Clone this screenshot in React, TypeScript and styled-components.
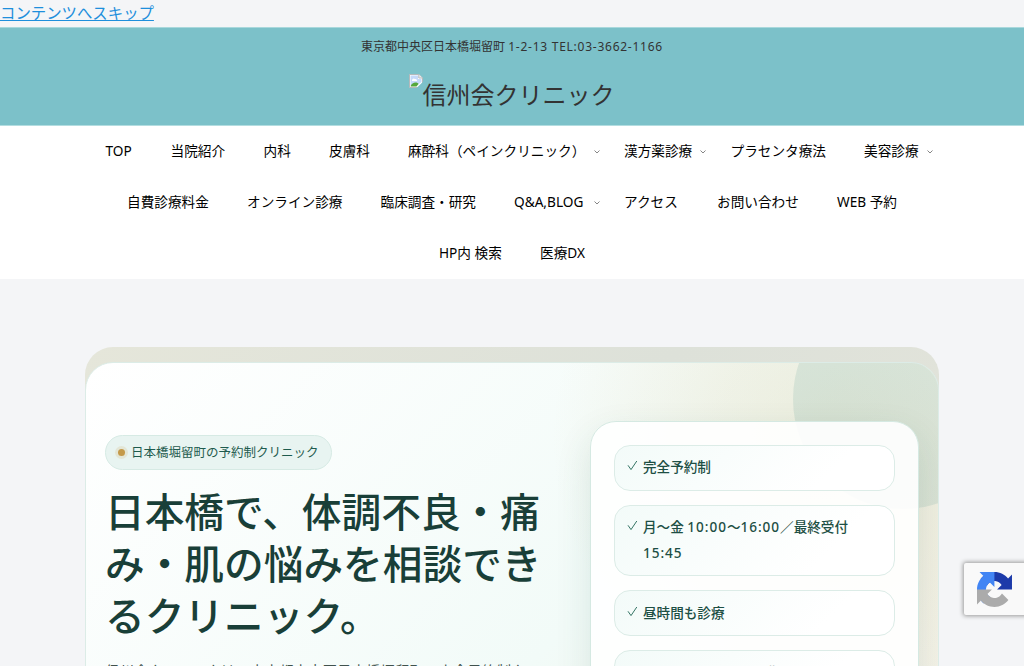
import React from "react";
import styled, { createGlobalStyle } from "styled-components";

const Global = createGlobalStyle`
  * { box-sizing: border-box; }
  html, body { margin: 0; height: 666px; overflow: hidden; }
  body {
    background: #f4f5f7;
    color: #333;
    font-family: "Noto Sans", "Noto Sans CJK JP", sans-serif;
    font-size: 17px;
    line-height: 27px;
  }
`;

const Page = styled.div`
  height: 666px;
  overflow: hidden;
`;

const SkipLink = styled.a`
  display: block;
  width: max-content;
  height: 27px;
  line-height: 28px;
  font-size: 15.4px;
  color: #1e8fdc;
  text-decoration: underline;
`;

const Header = styled.header`
  height: 99px;
  background: #7cc1c9;
  border-top: 1px solid #a9d8dc;
  border-bottom: 1px solid #b3dde0;
  display: flex;
  flex-direction: column;
  align-items: center;
`;

const Tagline = styled.div`
  margin-top: 9px;
  font-size: 12px;
  line-height: 20px;
  white-space: nowrap;
`;

const Latin = styled.span<{ $track: number }>`
  letter-spacing: ${(p) => p.$track}px;
`;

const Logo = styled.div`
  display: flex;
  align-items: flex-start;
  margin: 16px 1px 0 0;
  font-size: 24px;
  line-height: 43px;
  white-space: nowrap;
`;

const Nav = styled.nav`
  background: #fff;
  height: 153px;
`;

const NavRow = styled.div<{ $pad: number }>`
  display: flex;
  height: 51px;
  padding-left: ${(p) => p.$pad}px;
`;

const NavItem = styled.a<{ $w: number }>`
  flex: none;
  display: flex;
  align-items: center;
  width: ${(p) => p.$w}px;
  height: 51px;
  color: #000;
  font-size: 13.65px;
  white-space: nowrap;
`;

const NavLabel = styled.span<{ $w: number }>`
  flex: none;
  width: ${(p) => p.$w}px;
  padding-bottom: 3px;
`;

const Stage = styled.main`
  margin: 68px 85px 0;
  width: 854px;
  height: 340px;
  border-radius: 28px 28px 0 0;
  background: linear-gradient(135deg, #e5e6da 0%, #dde1d9 50%, #e1e3da 75%, #dfe6df 100%);
  padding-top: 15px;
`;

const Hero = styled.section`
  position: relative;
  height: 640px;
  border: 1px solid #dcece7;
  border-radius: 28px;
  overflow: hidden;
  background:
    radial-gradient(circle at 740px 75px, rgba(202, 164, 82, 0.16), rgba(202, 164, 82, 0.11) 110px, transparent 275px),
    linear-gradient(135deg, #ffffff 0%, #f2fbf8 50%, #f5f3e9 78%, #f5f3e9 100%);
  display: flex;
  align-items: flex-start;
`;

const Orb = styled.div`
  position: absolute;
  left: 707px;
  top: -74px;
  width: 220px;
  height: 220px;
  border-radius: 50%;
  background: rgba(80, 150, 145, 0.14);
`;

const Copy = styled.div`
  width: 504px;
  padding: 72px 0 0 19px;
`;

const Pill = styled.div`
  display: flex;
  align-items: center;
  width: 227px;
  height: 35px;
  padding: 0 0 1px 12px;
  border: 1px solid #d6eae4;
  border-radius: 18px;
  background: #e8f4f1;
  color: #1e5b4e;
  font-size: 12.5px;
  white-space: nowrap;
`;

const Dot = styled.i`
  flex: none;
  width: 7px;
  height: 7px;
  margin-right: 6px;
  border-radius: 50%;
  background: #c49a4a;
  box-shadow: 0 0 0 3px #e3e6d6;
`;

const Title = styled.h1`
  margin: 16px 0 0;
  color: #193f38;
  font-size: 39.7px;
  font-weight: 500;
  line-height: 52.2px;
  white-space: nowrap;
`;

const Lead = styled.p`
  margin: 14px 0 0;
  font-size: 14.5px;
  line-height: 29px;
  color: #40524d;
  white-space: nowrap;
`;

const Panel = styled.aside`
  position: relative;
  flex: none;
  width: 329px;
  height: 520px;
  margin-top: 58px;
  padding: 23px;
  border: 1px solid #d5e9e2;
  border-radius: 26px;
  background: rgba(255, 255, 255, 0.9);
  box-shadow: 0 14px 36px rgba(31, 90, 76, 0.12);
  display: flex;
  flex-direction: column;
  gap: 14px;
`;

const Check = styled.div`
  flex: none;
  display: flex;
  align-items: flex-start;
  padding: 8.4px 12px 10px 12px;
  border: 1px solid #dcece7;
  border-radius: 16px;
  background: linear-gradient(135deg, #f3fbf9, #ffffff 75%);
  color: #1d4f44;
  font-size: 13.6px;
  font-weight: 500;
  line-height: 25.5px;
`;

const CheckText = styled.span`
  margin-left: 5px;
  white-space: nowrap;
`;

const Badge = styled.div`
  position: absolute;
  left: 964px;
  top: 563px;
  width: 70px;
  height: 52px;
  padding: 9px 13px;
  border-radius: 2px;
  background: #f9f9f9;
  box-shadow: 0 0 4px 1px #999;
`;

const Caret = () => (
  <svg width="6" height="4" viewBox="0 0 6 4" fill="none" stroke="#666" strokeWidth="0.8">
    <path d="M0.5 0.5 3 3 5.5 0.5" />
  </svg>
);

const Tick = () => (
  <svg width="11" height="24" viewBox="0 0 11 24" fill="none" stroke="#357565" strokeWidth="1">
    <path d="M1 11.3 4 15.6 9.8 7" />
  </svg>
);

const BrokenImage = () => (
  <svg width="14" height="16" viewBox="0 0 14 16">
    <path d="M.5 1.5H10L13.5 5V14.5H.5Z" fill="#fff" stroke="#b4b9bb" />
    <path d="M1.500 2.500H9V6H12.500V9L7 13H1.500Z" fill="#c5d9fa" />
    <path d="M3 7a2 2 0 0 1 3-1 1.6 1.6 0 0 1 2 2H3Z" fill="#fff" />
    <path d="M1.500 13.500c1-3 3-4 5-4 1.500 0 2.500.5 3 1.500L7.500 13.500Z" fill="#55a83b" />
    <path d="M7.500 15 14 8.800V15Z" fill="#7cc1c9" />
    <path d="M9.800 1.500V5H13.300" fill="#eee" stroke="#b4b9bb" />
  </svg>
);

const Recaptcha = () => (
  <svg width="35" height="35" viewBox="0 0 64 64">
    <path d="M64 31.955a33 33 0 0 0-.033-1.370V4.687l-7.160 7.160C50.948 4.674 42.033.093 32.050.093c-10.389 0-19.622 4.960-25.458 12.640l11.736 11.860a15.550 15.550 0 0 1 4.754-5.334c2.050-1.600 4.952-2.906 8.968-2.906.485 0 .86.057 1.135.163 4.976.393 9.288 3.140 11.828 7.124l-8.307 8.307L64 31.953" fill="#1c3aa9" />
    <path d="M31.862.094a33 33 0 0 0-1.370.033H4.594l7.160 7.160C4.580 13.147 0 22.060 0 32.046c0 10.388 4.960 19.622 12.640 25.458L24.500 45.768a15.550 15.550 0 0 1-5.334-4.754c-1.600-2.050-2.906-4.952-2.906-8.968 0-.485.057-.86.163-1.135.393-4.976 3.140-9.288 7.124-11.828l8.307 8.307L31.860.095" fill="#4285f4" />
    <path d="M.001 32.045a33 33 0 0 0 .033 1.370v25.898l7.160-7.160c5.860 7.173 14.774 11.754 24.760 11.754 10.388 0 19.622-4.960 25.458-12.640L45.675 39.407a15.550 15.550 0 0 1-4.754 5.334c-2.050 1.600-4.952 2.906-8.968 2.906-.485 0-.86-.057-1.135-.163-4.976-.393-9.288-3.140-11.828-7.124l8.307-8.307c-10.522.041-22.400.066-27.295-.005" fill="#ababab" />
  </svg>
);

type Entry = { label: string; step: number; text: number; sub?: boolean };

const rows: { pad: number; items: Entry[] }[] = [
  {
    pad: 105.5,
    items: [
      { label: "TOP", step: 65, text: 27 },
      { label: "当院紹介", step: 93, text: 55 },
      { label: "内科", step: 65.5, text: 27 },
      { label: "皮膚科", step: 79, text: 41 },
      { label: "麻酔科（ペインクリニック）", step: 216, text: 185.5, sub: true },
      { label: "漢方薬診療", step: 106.5, text: 75.5, sub: true },
      { label: "プラセンタ療法", step: 133.5, text: 95 },
      { label: "美容診療", step: 70, text: 62.5, sub: true },
    ],
  },
  {
    pad: 127,
    items: [
      { label: "自費診療料金", step: 120, text: 82 },
      { label: "オンライン診療", step: 133.5, text: 95 },
      { label: "臨床調査・研究", step: 133.5, text: 95 },
      { label: "Q&A,BLOG", step: 110, text: 79.5, sub: true },
      { label: "アクセス", step: 93, text: 54 },
      { label: "お問い合わせ", step: 120, text: 82 },
      { label: "WEB 予約", step: 62, text: 61 },
    ],
  },
  {
    pad: 439,
    items: [
      { label: "HP内 検索", step: 101, text: 63 },
      { label: "医療DX", step: 50, text: 46 },
    ],
  },
];

const checks: React.ReactNode[] = [
  "完全予約制",
  <>
    月〜金 <Latin $track={0.95}>10:00</Latin>〜<Latin $track={0.95}>16:00</Latin>／最終受付
    <br />
    <Latin $track={0.95}>15:45</Latin>
  </>,
  "昼時間も診療",
  "オンライン診療／自費診療も対応",
];

export default function App() {
  return (
    <Page>
      <Global />
      <SkipLink href="#main">コンテンツへスキップ</SkipLink>
      <Header>
        <Tagline>
          東京都中央区日本橋堀留町 <Latin $track={0.75}>1-2-13 TEL:03-3662-1166</Latin>
        </Tagline>
        <Logo>
          <BrokenImage />
          <span>信州会クリニック</span>
        </Logo>
      </Header>
      <Nav>
        {rows.map((row) => (
          <NavRow key={row.pad} $pad={row.pad}>
            {row.items.map((it) => (
              <NavItem key={it.label} $w={it.step}>
                <NavLabel $w={it.text}>{it.label}</NavLabel>
                {it.sub && <Caret />}
              </NavItem>
            ))}
          </NavRow>
        ))}
      </Nav>
      <Stage id="main">
        <Hero>
          <Orb />
          <Copy>
            <Pill>
              <Dot />
              日本橋堀留町の予約制クリニック
            </Pill>
            <Title>
              日本橋で、体調不良・痛
              <br />
              み・肌の悩みを相談でき
              <br />
              るクリニック。
            </Title>
            <Lead>信州会クリニックは、東京都中央区日本橋堀留町の完全予約制ク</Lead>
          </Copy>
          <Panel>
            {checks.map((c, i) => (
              <Check key={i}>
                <Tick />
                <CheckText>{c}</CheckText>
              </Check>
            ))}
          </Panel>
        </Hero>
      </Stage>
      <Badge>
        <Recaptcha />
      </Badge>
    </Page>
  );
}
